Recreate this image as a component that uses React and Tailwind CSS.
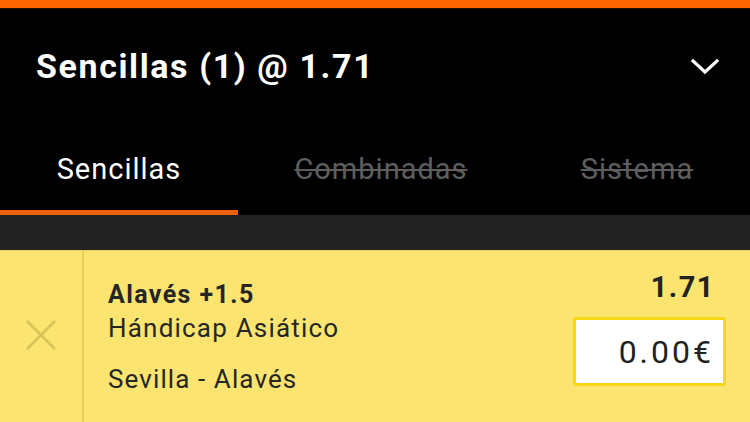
import React from 'react';

const tabs = [
  { label: 'Sencillas', width: 'w-[238px]', active: true },
  { label: 'Combinadas', width: 'w-[286px]' },
  { label: 'Sistema', width: 'flex-1' },
];

const Chevron = () => (
  <svg width="30" height="18" viewBox="0 0 30 18" fill="none">
    <path d="M3 3 L15 14 L27 3" stroke="#fff" strokeWidth="3.2" strokeLinecap="square" />
  </svg>
);

const Cross = () => (
  <svg width="32" height="32" viewBox="0 0 32 32">
    <path d="M2 2 L30 30 M30 2 L2 30" stroke="#d6c45a" strokeWidth="2.6" />
  </svg>
);

export default function App() {
  return (
    <div className="w-[750px] h-[422px] overflow-hidden bg-black font-['Roboto',sans-serif]">
      <div className="h-[8px] bg-[#ff6400]" />
      <div className="h-[1px] bg-[#2a0a00]" />
      <div className="flex h-[115px] items-center justify-between pl-[36px] pr-[30px]">
        <div className="text-[34px] font-bold text-white tracking-[1.6px]">Sencillas (1) @ 1.71</div>
        <Chevron />
      </div>

      <div className="flex h-[91px]">
        {tabs.map((t) => (
          <div key={t.label} className={`${t.width} flex flex-col`}>
            <div
              className={`flex flex-1 items-center justify-center pt-[6px] text-[29px] tracking-[1px] ${
                t.active ? 'text-white' : 'text-[#5e5e5e] line-through'
              }`}
            >
              {t.label}
            </div>
            <div className={`h-[5px] ${t.active ? 'bg-[#ee5f0c]' : 'bg-black'}`} />
          </div>
        ))}
      </div>

      <div className="h-[35px] bg-[#232323]" />

      <div className="flex h-[172px] bg-[#fbe46f] border-t border-[#e8d060]">
        <div className="flex w-[82px] items-center justify-center pb-[4px]">
          <Cross />
        </div>
        <div className="w-[2px] bg-[#e3cd55]" />
        <div className="flex flex-1 justify-between pl-[24px] pr-[24px]">
          <div className="pt-[30px] text-[#262626]">
            <div className="text-[25px] font-bold leading-[28px] tracking-[1.4px]">Alavés +1.5</div>
            <div className="mt-[2px] text-[26px] leading-[34px] tracking-[1.2px]">Hándicap Asiático</div>
            <div className="mt-[17px] text-[26px] leading-[34px] tracking-[1.1px]">Sevilla - Alavés</div>
          </div>
          <div className="flex flex-col items-end pt-[18px]">
            <div className="pr-[11px] text-[29px] font-bold leading-[36px] tracking-[1.5px] text-[#222]">1.71</div>
            <div className="mt-[12px] flex h-[69px] w-[153px] items-center justify-end rounded-[3px] border-[3px] border-[#f6d816] bg-white pr-[9px] text-[32px] tracking-[3px] text-[#222]">
              0.00€
            </div>
          </div>
        </div>
      </div>
    </div>
  );
}
